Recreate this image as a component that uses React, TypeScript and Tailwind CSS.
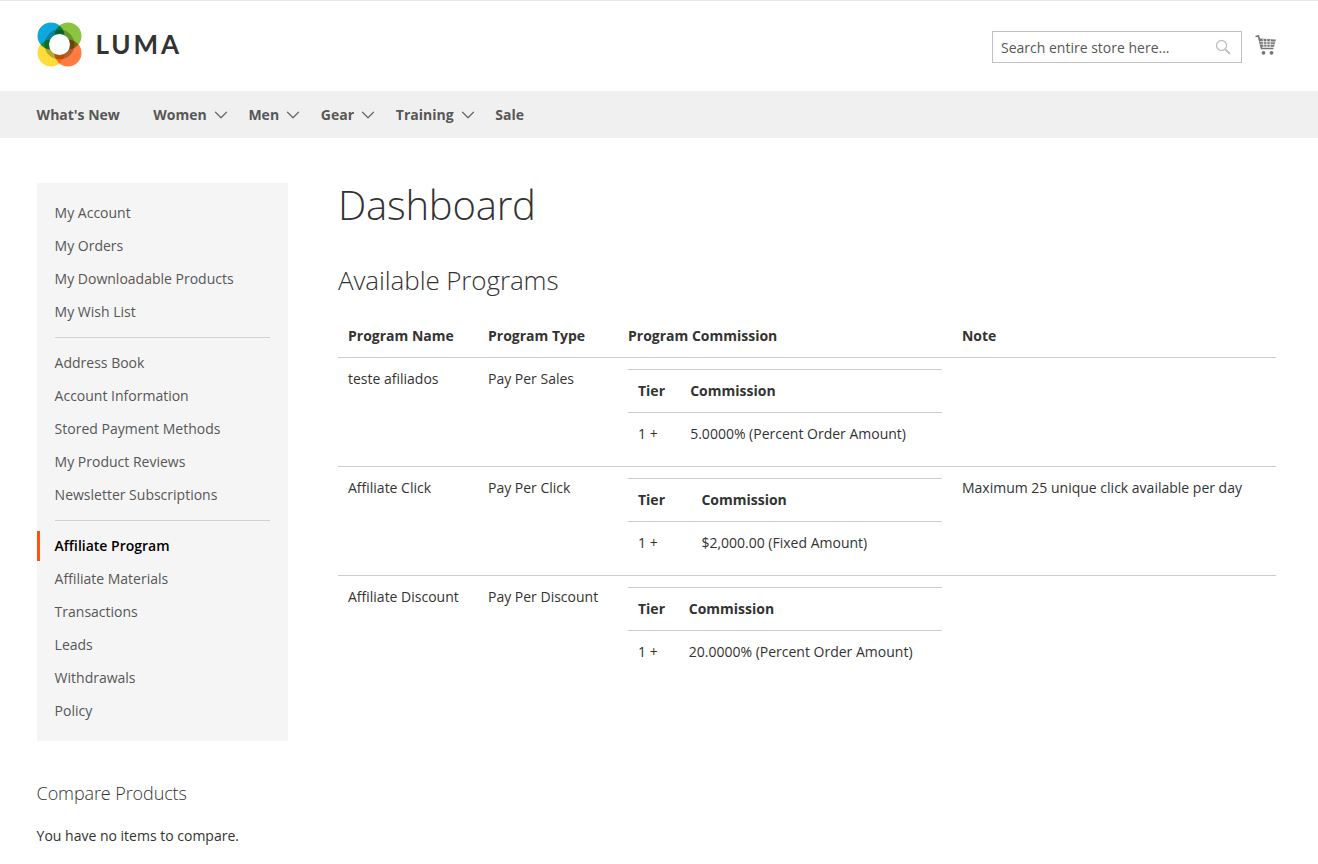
import { ChevronDown } from "lucide-react"

const navItems = [
  { label: "What's New", caret: false },
  { label: "Women", caret: true },
  { label: "Men", caret: true },
  { label: "Gear", caret: true },
  { label: "Training", caret: true },
  { label: "Sale", caret: false },
]

const accountLinks = [
  ["My Account", "My Orders", "My Downloadable Products", "My Wish List"],
  ["Address Book", "Account Information", "Stored Payment Methods", "My Product Reviews", "Newsletter Subscriptions"],
  ["Affiliate Program", "Affiliate Materials", "Transactions", "Leads", "Withdrawals", "Policy"],
]

const programs = [
  {
    name: "teste afiliados",
    type: "Pay Per Sales",
    commission: "5.0000% (Percent Order Amount)",
    note: "",
  },
  {
    name: "Affiliate Click",
    type: "Pay Per Click",
    commission: "$2,000.00 (Fixed Amount)",
    note: "Maximum 25 unique click available per day",
  },
  {
    name: "Affiliate Discount",
    type: "Pay Per Discount",
    commission: "20.0000% (Percent Order Amount)",
    note: "",
  },
]

function Logo() {
  return (
    <svg width="46" height="46" viewBox="0 0 46 46" aria-hidden="true" style={{ isolation: "isolate" }}>
      <circle cx="14" cy="14" r="13.5" fill="#0fa8de" style={{ mixBlendMode: "multiply" }} />
      <circle cx="31" cy="14" r="13.5" fill="#8bc53f" style={{ mixBlendMode: "multiply" }} />
      <circle cx="14" cy="31" r="13.5" fill="#ffdc3b" style={{ mixBlendMode: "multiply" }} />
      <circle cx="31" cy="31" r="13.5" fill="#ff7b3f" style={{ mixBlendMode: "multiply" }} />
      <circle cx="22.5" cy="22.5" r="15" fill="#b4c4bc" style={{ mixBlendMode: "multiply" }} />
      <circle cx="22.5" cy="22.5" r="10.5" fill="#ffffff" />
    </svg>
  )
}

function Cart() {
  return (
    <svg width="21" height="20" viewBox="0 0 21 20" aria-hidden="true">
      <path d="M0.5 1.5 L3.5 1 L6.5 13.5 L18.5 13.5" fill="none" stroke="#757575" strokeWidth="1.6" />
      <path d="M4 3.5 L20.8 4.5 L19 11.8 L5.8 11.8 Z" fill="#757575" />
      <path d="M8 4 L9 12 M11.7 4 L12 12 M15.4 4.4 L15 12 M4.8 6.6 L20 6.9 M5.4 9.2 L19.5 9.4" stroke="#ffffff" strokeWidth="0.8" fill="none" />
      <circle cx="8.5" cy="17.8" r="1.9" fill="#757575" />
      <circle cx="16.5" cy="17.8" r="1.9" fill="#757575" />
    </svg>
  )
}

function SearchGlyph() {
  return (
    <svg width="16" height="16" viewBox="0 0 16 16" fill="none" stroke="#c2c2c2" aria-hidden="true">
      <circle cx="6.5" cy="6.5" r="5" strokeWidth="1.4" />
      <path d="M10.2 10.2 L15 15" strokeWidth="2" />
    </svg>
  )
}

export default function App() {
  return (
    <div className="min-h-[864px] overflow-hidden bg-white font-['Open_Sans',sans-serif] text-sm text-[#333333]">
      {/* Header */}
      <header className="flex h-[91px] items-start justify-between border-t border-[#e8e8e8] pl-[37px] pr-[42px]">
        <div className="mt-[21px] flex items-center">
          <Logo />
          <span className="-mt-[3px] ml-[12.5px] font-['Lato',sans-serif] text-[26px] font-bold leading-none tracking-[0.11em] text-[#333333]">
            LUMA
          </span>
        </div>
        <div className="mt-[30px] flex items-start">
          <div className="flex h-8 w-[250px] items-center justify-between border border-[#c2c2c2] pl-2 pr-2.5">
            <span className="pt-px text-sm text-[#575757]">Search entire store here...</span>
            <SearchGlyph />
          </div>
          <div className="ml-[13px] mt-1">
            <Cart />
          </div>
        </div>
      </header>

      {/* Nav */}
      <nav className="flex h-[47px] items-center bg-[#f0f0f0] pl-[36.6px] font-bold text-[#575757]">
        {navItems.map((item) =>
          item.caret ? (
            <div key={item.label} className="mr-[16.75px] flex items-center">
              <span>{item.label}</span>
              <ChevronDown size={22} strokeWidth={1.3} className="ml-[3px] text-[#666666]" />
            </div>
          ) : (
            <div key={item.label} className="mr-[33.4px]">
              {item.label}
            </div>
          ),
        )}
      </nav>

      {/* Content */}
      <div className="flex pl-[36.6px] pr-[42px] pt-[45px]">
        <aside className="w-[251.4px] shrink-0">
          <div className="bg-[#f5f5f5] py-[15px]">
            {accountLinks.map((group, i) => (
              <div key={i}>
                {i > 0 && <div className="mx-[18px] my-2.5 border-t border-[#d1d1d1]" />}
                <ul className="flex flex-col gap-[3px]">
                  {group.map((link) =>
                    link === "Affiliate Program" ? (
                      <li key={link} className="flex h-[30px] items-center border-l-[3px] border-[#ff5501] pl-[15px] font-semibold text-[#000000]">
                        {link}
                      </li>
                    ) : (
                      <li key={link} className="flex h-[30px] items-center pl-[18px] text-[#575757]">
                        {link}
                      </li>
                    ),
                  )}
                </ul>
              </div>
            ))}
          </div>
          <div className="mt-[38px] text-lg font-light tracking-[-0.1px] text-[#333333]">Compare Products</div>
          <div className="mt-[19px]">You have no items to compare.</div>
        </aside>

        <main className="ml-[50px] flex-1">
          <h1 className="-mt-[3px] text-[40px] font-light leading-[50px] tracking-[-0.2px] text-[#333333]">Dashboard</h1>
          <h2 className="mt-[34px] text-[26px] font-light leading-[33px] tracking-[-0.1px] text-[#333333]">Available Programs</h2>
          <table className="mt-[18px] w-[938px] table-fixed border-collapse text-left">
            <colgroup>
              <col className="w-[140px]" />
              <col className="w-[140px]" />
              <col className="w-[334px]" />
              <col className="w-[324px]" />
            </colgroup>
            <thead>
              <tr className="h-[42px] border-b border-[#cccccc]">
                <th className="px-2.5 font-bold">Program Name</th>
                <th className="px-2.5 font-bold">Program Type</th>
                <th className="px-2.5 font-bold">Program Commission</th>
                <th className="px-2.5 font-bold">Note</th>
              </tr>
            </thead>
            <tbody>
              {programs.map((p, i) => (
                <tr key={p.name} className={i < programs.length - 1 ? "border-b border-[#cccccc]" : ""}>
                  <td className="px-2.5 pt-[11px] align-top leading-5">{p.name}</td>
                  <td className="px-2.5 pt-[11px] align-top leading-5">{p.type}</td>
                  <td className="px-2.5 pb-[10.5px] pt-[11px] align-top">
                    <table className="w-full border-collapse border-t border-[#cccccc] text-left">
                      <thead>
                        <tr className="h-[43px] border-b border-[#cccccc]">
                          <th className="px-2.5 font-bold">Tier</th>
                          <th className="px-2.5 font-bold">Commission</th>
                        </tr>
                      </thead>
                      <tbody>
                        <tr className="h-[43px]">
                          <td className="whitespace-nowrap px-2.5">1 +</td>
                          <td className="px-2.5">{p.commission}</td>
                        </tr>
                      </tbody>
                    </table>
                  </td>
                  <td className="px-2.5 pt-[11px] align-top leading-5">{p.note}</td>
                </tr>
              ))}
            </tbody>
          </table>
        </main>
      </div>
    </div>
  )
}
